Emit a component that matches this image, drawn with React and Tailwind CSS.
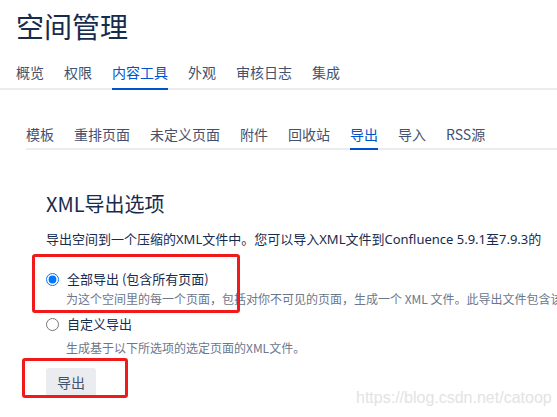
import React from 'react';

const topTabs = ['概览', '权限', '内容工具', '外观', '审核日志', '集成'];
const subTabs = ['模板', '重排页面', '未定义页面', '附件', '回收站', '导出', '导入', 'RSS源'];

const App = () => {
    return (
        <div
            className="relative w-[557px] h-[417px] overflow-hidden bg-white text-[#172b4d]"
            style={{ fontFamily: '"Noto Sans CJK SC", "Noto Sans", sans-serif' }}
        >
            {/* Header */}
            <div className="pl-4 pt-[8px]">
                <h1 className="text-[28px] leading-[36px] font-normal text-[#172b4d]">空间管理</h1>
            </div>

            {/* Top navigation */}
            <div className="mt-[18px] flex gap-5 pl-4 border-b-2 border-[#ebecf0]">
                {topTabs.map((t) => (
                    <div
                        key={t}
                        className={
                            t === '内容工具'
                                ? 'text-[14px] leading-[20px] pb-[6px] -mb-[2px] border-b-2 border-[#0052cc] text-[#0052cc]'
                                : 'text-[14px] leading-[20px] pb-[6px] text-[#42526e]'
                        }
                    >
                        {t}
                    </div>
                ))}
            </div>

            {/* Sub navigation */}
            <div className="mt-[34px] ml-[26px] flex gap-5 border-b-2 border-[#ebecf0]">
                {subTabs.map((t) => (
                    <div
                        key={t}
                        className={
                            t === '导出'
                                ? 'text-[14px] leading-[20px] pb-[4px] -mb-[2px] border-b-2 border-[#0052cc] text-[#0052cc]'
                                : 'text-[14px] leading-[20px] pb-[4px] text-[#42526e]'
                        }
                    >
                        {t}
                    </div>
                ))}
            </div>

            {/* Export options */}
            <div className="pl-[46px] whitespace-nowrap">
                <h2 className="mt-[40px] text-[20px] leading-[28px] font-normal text-[#172b4d]">XML导出选项</h2>
                <p
                    className="mt-[11px] text-[13px] leading-[20px] text-[#172b4d]"
                    style={{ fontFamily: '"Noto Sans", "Noto Sans CJK SC", sans-serif' }}
                >
                    导出空间到一个压缩的XML文件中。您可以导入XML文件到Confluence 5.9.1至7.9.3的
                </p>

                <label className="mt-[20px] flex items-center h-[20px] text-[13px] text-[#172b4d]">
                    <input type="radio" name="exportType" defaultChecked className="m-0 w-[13px] h-[13px]" />
                    <span className="ml-[8px]">全部导出 (包含所有页面)</span>
                </label>
                <p className="mt-[1px] ml-[20px] text-[12px] leading-[18px] text-[#6b778c]">
                    为这个空间里的每一个页面，包括对你不可见的页面，生成一个 XML 文件。此导出文件包含该
                </p>

                <label className="mt-[6px] flex items-center h-[20px] text-[13px] text-[#172b4d]">
                    <input type="radio" name="exportType" className="m-0 w-[13px] h-[13px]" />
                    <span className="ml-[8px]">自定义导出</span>
                </label>
                <p className="mt-[5px] ml-[20px] text-[12px] leading-[18px] text-[#6b778c]">
                    生成基于以下所选项的选定页面的XML文件。
                </p>

                <button className="mt-[11px] w-[50px] h-[29px] rounded-[3px] bg-[#ebecf0] text-[14px] text-[#42526e]">
                    导出
                </button>
            </div>

            {/* Annotation boxes */}
            <div className="absolute left-[32px] top-[254px] w-[208px] h-[59px] border-[3px] border-[#f01a1a] rounded-[3px]" />
            <div className="absolute left-[22px] top-[358px] w-[106px] h-[40px] border-[3px] border-[#f01a1a] rounded-[3px]" />

            {/* Watermark */}
            <div
                className="absolute left-[356px] top-[388px] text-[16px] leading-[20px] text-[#e3e3e3]"
                style={{ fontFamily: '"Liberation Sans", Arial, sans-serif' }}
            >
                https://blog.csdn.net/catoop
            </div>
        </div>
    );
};

export default App;
